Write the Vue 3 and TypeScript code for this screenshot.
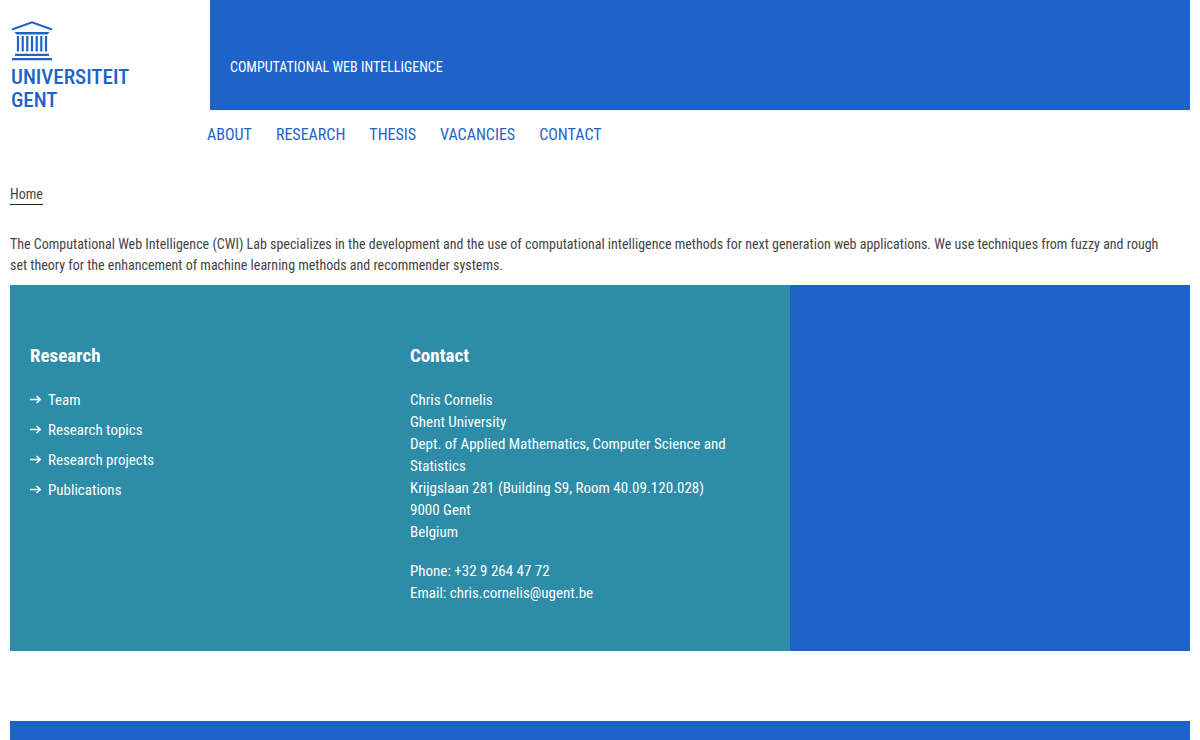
<script setup lang="ts">
const navItems: string[] = ['About', 'Research', 'Thesis', 'Vacancies', 'Contact']
const researchLinks: string[] = ['Team', 'Research topics', 'Research projects', 'Publications']
const addressLines: string[] = [
  'Chris Cornelis',
  'Ghent University',
  'Dept. of Applied Mathematics, Computer Science and Statistics',
  'Krijgslaan 281 (Building S9, Room 40.09.120.028)',
  '9000 Gent',
  'Belgium',
]
</script>

<template>
  <div class="page">
    <header class="header">
      <a class="logo" href="#" aria-label="Universiteit Gent">
        <svg class="temple" width="44" height="42" viewBox="0 0 44 42" aria-hidden="true">
          <path d="M2 9.5 L22 2.2 L42 9.5" fill="none" stroke="currentColor" stroke-width="2" />
          <path d="M4.5 12 H39.5 L37.5 14.5 H6.5 Z" fill="currentColor" />
          <path d="M8 16 V31.5 M12.7 16 V31.5 M17.3 16 V31.5 M22 16 V31.5 M26.7 16 V31.5 M31.3 16 V31.5 M36 16 V31.5" stroke="currentColor" stroke-width="2.2" />
          <path d="M5 34.8 H39 M2 39.2 H42" stroke="currentColor" stroke-width="2.3" />
        </svg>
        <span class="logo-text">UNIVERSITEIT</span>
        <span class="logo-text">GENT</span>
      </a>
      <div class="banner">
        <a class="site-title" href="#">COMPUTATIONAL WEB INTELLIGENCE</a>
      </div>
    </header>

    <nav class="nav" aria-label="Main">
      <a v-for="item in navItems" :key="item" href="#">{{ item }}</a>
    </nav>

    <main>
      <div class="crumbs"><a href="#">Home</a></div>
      <p class="intro">
        The Computational Web Intelligence (CWI) Lab specializes in the development and the use of
        computational intelligence methods for next generation web applications. We use techniques
        from fuzzy and rough set theory for the enhancement of machine learning methods and
        recommender systems.
      </p>
      <div class="panels">
        <section class="panel">
          <h2>Research</h2>
          <ul>
            <li v-for="link in researchLinks" :key="link">
              <a href="#">
                <svg width="12" height="10" viewBox="0 0 12 10" aria-hidden="true">
                  <path d="M0 4.5 H10 M6.5 1 L10.3 4.5 L6.5 8" fill="none" stroke="currentColor" stroke-width="1.5" />
                </svg>
                {{ link }}
              </a>
            </li>
          </ul>
        </section>
        <section class="panel">
          <h2>Contact</h2>
          <address>
            <div v-for="line in addressLines" :key="line">{{ line }}</div>
            <div class="reach">
              <div>Phone: +32 9 264 47 72</div>
              <div>Email: <a href="mailto:chris.cornelis@ugent.be">chris.cornelis@ugent.be</a></div>
            </div>
          </address>
        </section>
        <div class="filler"></div>
      </div>
    </main>
    <footer class="footer"></footer>
  </div>
</template>

<style>
body {
  background: #fff;
}
</style>

<style scoped>
.page {
  padding: 0 10px;
  font-family: "Roboto Condensed", "Liberation Sans Narrow", "Arial Narrow", "Noto Sans", sans-serif;
  font-size: 15px;
  line-height: 22px;
  color: #444;
}
a {
  color: inherit;
  text-decoration: none;
}
.header {
  display: flex;
  height: 110px;
}
.logo {
  display: flex;
  flex-direction: column;
  flex: 0 0 200px;
  box-sizing: border-box;
  padding-top: 20px;
  color: #1e64c8;
}
.temple {
  flex: none;
  margin-bottom: 4px;
}
.logo-text {
  padding-left: 1px;
  font-size: 21px;
  font-weight: 500;
  line-height: 23px;
}
.banner {
  flex: 1;
  padding: 56px 20px 0;
  background: #1e64c8;
  color: #fff;
  font-size: 14px;
}
.site-title {
  display: block;
}
.nav {
  display: flex;
  gap: 24px;
  padding: 14px 0 0 197px;
  font-size: 16px;
  color: #1e64c8;
  text-transform: uppercase;
}
.crumbs {
  margin-top: 39px;
  font-size: 14px;
}
.crumbs a {
  display: block;
  width: fit-content;
  line-height: 19px;
  border-bottom: 1px solid #222;
}
.intro {
  margin: 29px 0 9px;
  padding-right: 24px;
  font-size: 14px;
  line-height: 21px;
}
.panels {
  display: grid;
  grid-template-columns: 380px 400px 1fr;
  min-height: 366px;
}
.panel {
  padding: 60px 40px 45px 20px;
  background: #2d8ca8;
  color: #fff;
}
h2 {
  margin: 0 0 22px;
  font-size: 19px;
  line-height: 22px;
}
ul {
  margin: 0;
  padding: 0;
  list-style: none;
}
li {
  margin-bottom: 8px;
}
li a {
  display: flex;
  align-items: center;
  gap: 6px;
}
address {
  font-style: normal;
}
.reach {
  margin-top: 17px;
}
.filler {
  background: #1e64c8;
}
.footer {
  height: 19px;
  margin-top: 70px;
  background: #1e64c8;
}
</style>
